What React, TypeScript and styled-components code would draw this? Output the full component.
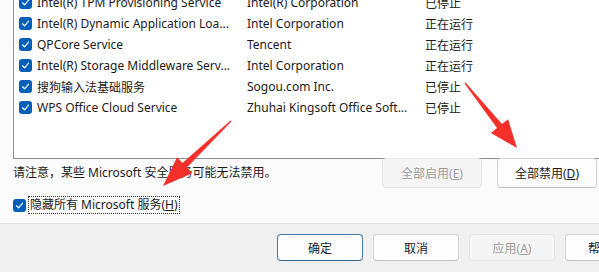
import React from 'react';
import styled, { createGlobalStyle } from 'styled-components';

const GlobalStyle = createGlobalStyle`
  html, body {
    margin: 0;
    padding: 0;
    background: #f0f0f0;
  }
  body {
    font-family: "Noto Sans", "Noto Sans CJK SC", sans-serif;
    font-size: 12px;
    color: #1b1b1b;
  }
`;

const Window = styled.div`
  position: relative;
  width: 599px;
  height: 272px;
  overflow: hidden;
  background: #f0f0f0;
`;

const Content = styled.div`
  display: flow-root;
  height: 224px;
  padding-left: 13px;
  background: #fbfbfb;
  border-bottom: 1px solid #e3e3e3;
  box-sizing: border-box;
`;

const ListBox = styled.div`
  margin-top: -9px;
  width: 600px;
  height: 168px;
  box-sizing: border-box;
  border: 1px solid #8e8e8e;
  background: #ffffff;
  overflow: hidden;
`;

const Row = styled.div`
  display: grid;
  grid-template-columns: 18px 210px 178px 1fr;
  align-items: center;
  height: 21px;
  padding-left: 5px;
  white-space: nowrap;
`;

const Cell = styled.span`
  overflow: hidden;
  white-space: nowrap;
`;

const CheckBox = styled.span`
  display: inline-flex;
  align-items: center;
  justify-content: center;
  width: 13px;
  height: 13px;
  border-radius: 3px;
  background: #005fb8;
  flex-shrink: 0;
`;

const ActionRow = styled.div`
  display: flex;
  align-items: center;
  margin-top: -1px;
  padding-right: 2px;
  gap: 15px;
`;

const Note = styled.span`
  flex: 1;
  margin-top: -3px;
  white-space: nowrap;
`;

const Button = styled.button<{ disabled?: boolean; primary?: boolean; h?: number }>`
  width: ${p => (p.h === 30 ? 100 : 86)}px;
  height: ${p => p.h || 27}px;
  box-sizing: border-box;
  padding: 0;
  border-radius: 4px;
  font-family: inherit;
  font-size: 12px;
  flex-shrink: 0;
  background: ${p => (p.disabled ? '#f5f5f5' : '#fdfdfd')};
  color: ${p => (p.disabled ? '#9d9d9d' : '#1b1b1b')};
  border: 1px solid ${p => (p.primary ? '#4a78a8' : p.disabled ? '#e6e6e6' : '#d3d3d3')};
  border-bottom-color: ${p => (p.primary ? '#2f5f93' : p.disabled ? '#e6e6e6' : '#c2c2c2')};
`;

const Key = styled.span`
  text-decoration: underline;
`;

const HideRow = styled.div`
  display: flex;
  align-items: center;
  margin-top: 8px;
  height: 18px;
`;

const FocusLabel = styled.span`
  margin-left: 2px;
  padding: 0 1px;
  line-height: 16px;
  border: 1px dotted #333;
  white-space: nowrap;
`;

const Footer = styled.div`
  display: flex;
  gap: 10px;
  padding: 10px 0 0 277px;
`;

const Overlay = styled.svg`
  position: absolute;
  left: 0;
  top: 0;
  pointer-events: none;
`;

const Check = () => (
  <svg width="9" height="9" viewBox="0 0 9 9">
    <path d="M1.5 4.8 L3.6 6.8 L7.6 2.2" fill="none" stroke="#fff" strokeWidth="1.2" strokeLinecap="round" strokeLinejoin="round" />
  </svg>
);

const services = [
  ['Intel(R) TPM Provisioning Service', 'Intel(R) Corporation', '已停止'],
  ['Intel(R) Dynamic Application Loa...', 'Intel Corporation', '正在运行'],
  ['QPCore Service', 'Tencent', '正在运行'],
  ['Intel(R) Storage Middleware Serv...', 'Intel Corporation', '正在运行'],
  ['搜狗输入法基础服务', 'Sogou.com Inc.', '已停止'],
  ['WPS Office Cloud Service', 'Zhuhai Kingsoft Office Soft...', '已停止'],
];

// tapered annotation arrow from tail to tip
const arrowPoints = (tx: number, ty: number, hx: number, hy: number, headLen: number, headHalf: number) => {
  const dx = hx - tx;
  const dy = hy - ty;
  const len = Math.hypot(dx, dy);
  const ux = dx / len;
  const uy = dy / len;
  const nx = -uy;
  const ny = ux;
  const bx = hx - ux * headLen;
  const by = hy - uy * headLen;
  const pts = [
    [tx + nx * 0.6, ty + ny * 0.6],
    [bx + nx * 3.2, by + ny * 3.2],
    [bx + nx * headHalf, by + ny * headHalf],
    [hx, hy],
    [bx - nx * headHalf, by - ny * headHalf],
    [bx - nx * 3.2, by - ny * 3.2],
    [tx - nx * 0.6, ty - ny * 0.6],
  ];
  return pts.map(p => `${p[0].toFixed(1)},${p[1].toFixed(1)}`).join(' ');
};

export default function App() {
  return (
    <>
      <GlobalStyle />
      <Window>
        <Content>
          <ListBox>
            {services.map(s => (
              <Row key={s[0]}>
                <CheckBox><Check /></CheckBox>
                <Cell>{s[0]}</Cell>
                <Cell>{s[1]}</Cell>
                <Cell>{s[2]}</Cell>
              </Row>
            ))}
          </ListBox>
          <ActionRow>
            <Note>请注意，某些 Microsoft 安全服务可能无法禁用。</Note>
            <Button h={30} disabled>全部启用(<Key>E</Key>)</Button>
            <Button h={30}>全部禁用(<Key>D</Key>)</Button>
          </ActionRow>
          <HideRow>
            <CheckBox><Check /></CheckBox>
            <FocusLabel>隐藏所有 Microsoft 服务(<Key>H</Key>)</FocusLabel>
          </HideRow>
        </Content>
        <Footer>
          <Button primary>确定</Button>
          <Button>取消</Button>
          <Button disabled>应用(<Key>A</Key>)</Button>
          <Button>帮助(<Key>H</Key>)</Button>
        </Footer>
        <Overlay width="599" height="272">
          <polygon points={arrowPoints(231, 121, 163, 186, 30, 11)} fill="#f5302a" />
          <polygon points={arrowPoints(465, 83, 517, 148, 28, 11)} fill="#f5302a" />
        </Overlay>
      </Window>
    </>
  );
}
